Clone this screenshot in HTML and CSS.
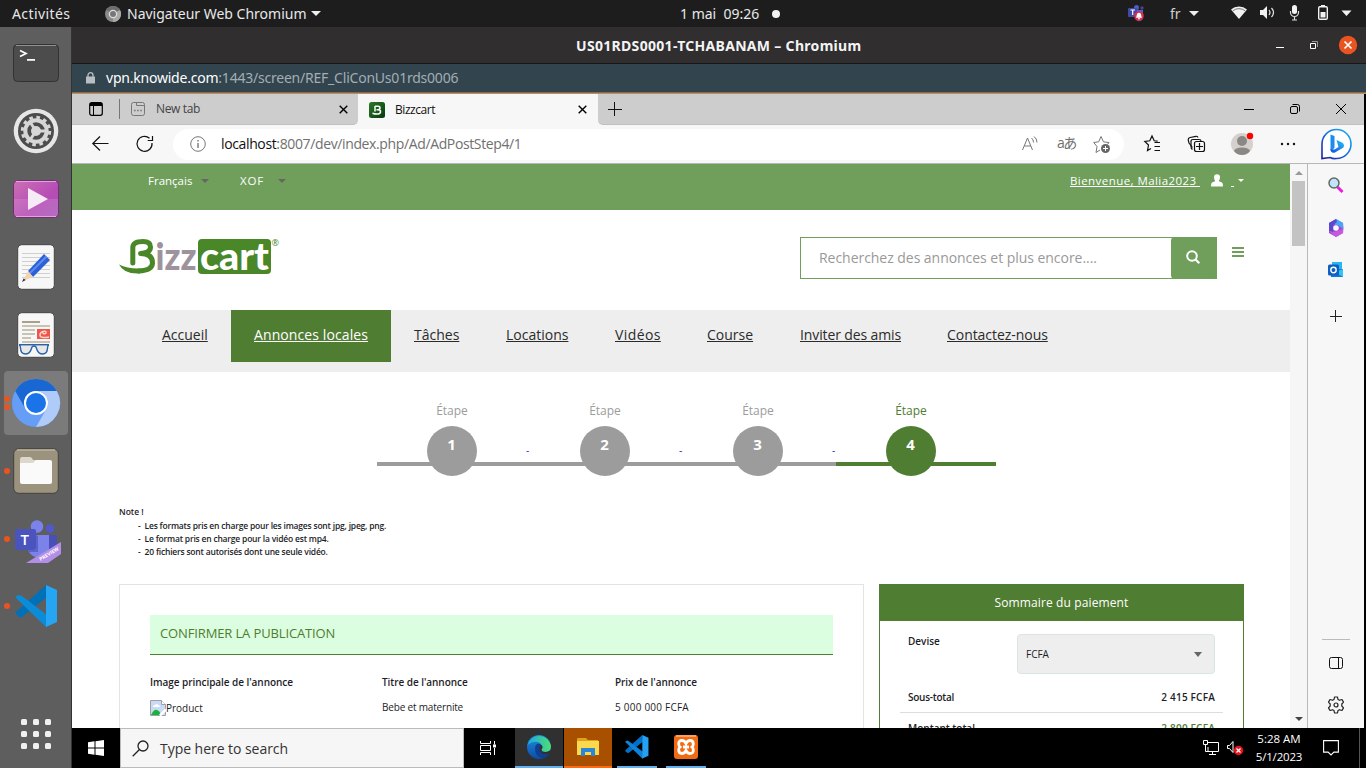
FILE: index.html
```html
<!DOCTYPE html>
<html lang="fr">
<head>
<meta charset="utf-8">
<title>US01RDS0001-TCHABANAM – Chromium</title>
<link rel="stylesheet" href="styles.css">
</head>
<body>
<header class="gnome">
  <span class="gnome-act">Activités</span>
  <svg class="gnome-chrome" width="16" height="16" viewBox="0 0 16 16"><circle cx="8" cy="8" r="8" fill="#8a8a8a"/><path d="M8 8L1.2 4A8 8 0 0 1 15 4z" fill="#6d6d6d"/><path d="M8 8l7-4a8 8 0 0 1-7 12z" fill="#aaa"/><circle cx="8" cy="8" r="4.3" fill="#ddd"/><circle cx="8" cy="8" r="3" fill="#777"/></svg>
  <span class="gnome-app">Navigateur Web Chromium</span>
  <i class="tri gnome-tri"></i>
  <span class="gnome-date">1 mai&nbsp; 09:26</span>
  <i class="gnome-dot"></i>
  <svg class="tray-teams" width="16" height="16" viewBox="0 0 16 16"><circle cx="8.500" cy="2.500" r="2.500" fill="#5059c9"/><circle cx="14" cy="3" r="1.700" fill="#40488f"/><path d="M6 5h9v6a4 4 0 0 1-8 2z" fill="#5b62c5"/><rect y="3" width="9" height="9" rx="1" fill="#4048a8"/><path d="M2.500 5h4.500M4.700 5v5" stroke="#fff" stroke-width="1.200"/><circle cx="11" cy="11" r="4.800" fill="#d6304e"/><path d="M11 7.800c2.500 0 2 3 3 5H8c1-2 .5-5 3-5zM10 13.200h2v1h-2z" fill="#fff"/></svg>
  <span class="gnome-lang">fr</span>
  <i class="tri lang-tri"></i>
  <svg class="tray" width="128" height="18" viewBox="0 0 128 18" fill="#f2f2f2"><path d="M0 5.500a12 12 0 0 1 16 0L8 15z"/><path d="M1.800 6.800a10 10 0 0 1 12.400 0" fill="none" stroke="#777" stroke-width="1"/><path d="M29 6h3l4-4v13l-4-4h-3z"/><path d="M38 6q2 2.500 0 5M40.500 4q4 4.500 0 9" fill="none" stroke="#e8e8e8" stroke-width="1.200"/><rect x="61" y="1" width="5" height="9" rx="2.500"/><path d="M59.500 7v1.500a4 4 0 0 0 8 0V7M63.500 12v4M61 16h5" fill="none" stroke="#ddd" stroke-width="1.200"/><path d="M90 1h4v2h-4z"/><rect x="87.700" y="2.700" width="8.600" height="12.600" rx="1.200" fill="none" stroke="#f2f2f2" stroke-width="1.400"/><path d="M89.500 8h5v5.500h-5zM110.500 6.500h10L115.500 12z"/></svg>
</header>
<div class="desk">
<nav class="dock">
  <svg class="d-term" width="46" height="38" viewBox="0 0 46 38"><rect x=".5" y=".5" width="45" height="37" rx="4" fill="#4c4c4c" stroke="#323232"/><path d="M3 1.500h40" stroke="#909090"/><path d="M7 6.500l6 3-6 3M14 15.800h8" fill="none" stroke="#fff" stroke-width="1.700"/></svg>
  <svg class="d-set" width="46" height="46" viewBox="0 0 46 46"><circle cx="23" cy="23" r="22.300" fill="#e6e6e4"/><circle cx="23" cy="23" r="18" fill="#4c4c4c"/><circle cx="23" cy="23" r="13.700" fill="none" stroke="#d6d6d6" stroke-width="3" stroke-dasharray="3.600 3.570"/><circle cx="23" cy="23" r="10.700" fill="none" stroke="#d6d6d6" stroke-width="4"/><circle cx="23" cy="23" r="5" fill="#d6d6d6"/><path d="M23 23h10M23 23l-6-9M23 23l-6 9" stroke="#d6d6d6" stroke-width="3"/></svg>
  <svg class="d-play" width="46" height="38" viewBox="0 0 46 38"><defs><linearGradient id="pk" x1="0" y1="0" x2="1" y2="1"><stop offset="0" stop-color="#cc70b4"/><stop offset=".6" stop-color="#b64cb6"/><stop offset="1" stop-color="#a65ab8"/></linearGradient></defs><rect x=".5" y=".5" width="45" height="37" rx="4" fill="url(#pk)" stroke="#703070"/><path d="M1 19h44v14q0 4-4 4H5q-4 0-4-4z" fill="#fff" opacity=".12"/><path d="M3 36.500h40M3 1.500h40" stroke="#e3a3dc"/><path d="M15 8l20 11-20 11z" fill="#f5eaf5"/></svg>
  <svg class="d-edit" width="38" height="46" viewBox="0 0 38 46"><rect x=".7" y=".7" width="36.600" height="44.600" rx="4" fill="#f7f7f7" stroke="#444"/><path d="M5 9.500h28M5 13.500h28M5 17.500h28M5 21.500h28M5 25.500h28M5 29.500h28M5 33.500h28" stroke="#cfcfcf"/><path d="M11 27L27 10l6 6-17 17z" fill="#2c60d8"/><path d="M13 29L29.500 12.500" stroke="#5d8cf0" stroke-width="2"/><path d="M11 27L6 37l10-4z" fill="#f4d3b0"/><path d="M6.500 34.500L5 38l3.700-2z" fill="#333"/></svg>
  <svg class="d-doc" width="38" height="46" viewBox="0 0 38 46"><rect x=".7" y=".7" width="36.600" height="44.600" rx="4" fill="#f7f7f7" stroke="#444"/><path d="M5 10h18" stroke="#aaa08c" stroke-width="2"/><path d="M5 14h28M5 18h13M5 22h13M5 26h9M5 30h28" stroke="#c8c4b4" stroke-width="2"/><rect x="20" y="17" width="13" height="10" fill="#ef5548"/><path d="M32 25c-4 1-9 1-9-2 0-4 7-5 6-2-1 2-5 0-3-2" fill="none" stroke="#ffd4cc" stroke-width="1.500"/><path d="M2 33h30" stroke="#2c62a8" stroke-width="2"/><path d="M3 33l1 6q1 3 5 3t6-7q2-2 4 0 2 7 6 7t5-3l1-6" fill="#ddd" fill-opacity=".6" stroke="#2c62a8" stroke-width="1.400"/></svg>
  <div class="d-active"><i></i><i></i><svg width="48" height="48" viewBox="0 0 48 48"><circle cx="24" cy="24" r="24" fill="#669df6"/><path d="M3.200 12A24 24 0 0 1 44.800 12H24A12 12 0 0 0 13.600 30z" fill="#1967d2"/><path d="M44.800 12A24 24 0 0 1 24 48L34.400 30A12 12 0 0 0 24 12z" fill="#aecbfa"/><circle cx="24" cy="24" r="12" fill="#fff"/><circle cx="24" cy="24" r="10" fill="#1a73e8"/></svg></div>
  <div class="d-row d-files"><i></i><svg width="46" height="46" viewBox="0 0 46 46"><rect x=".7" y=".7" width="44.600" height="44.600" rx="5" fill="#9c937f" stroke="#44423a"/><path d="M4 2h38" stroke="#c8c2b2"/><path d="M7 12q0-3 2-3h8q2 0 3 3h17v8H7z" fill="#ded8cc"/><path d="M7 15h13l3-3h14q2 0 2 2v20q0 2-2 2H9q-2 0-2-2z" fill="#fafafa"/></svg></div>
  <div class="d-row d-teams"><i></i><svg width="46" height="43" viewBox="0 0 46 43"><circle cx="22" cy="6.500" r="6.300" fill="#7b83eb"/><circle cx="35" cy="8.500" r="4.300" fill="#5059c9"/><path d="M28 15h14v15q-4 9-12 5z" fill="#4850b8"/><path d="M13 15h21v14a11 11 0 0 1-21 1z" fill="#7b83eb"/><rect y="9" width="21" height="21" rx="2" fill="#4b53bc"/><path d="M21 15v14q0 1-1 1h-7v2h10V16z" fill="#5c63c8"/><path d="M11 43L46 22v12l-13 9z" fill="#b38ee6"/><text x="5.500" y="25" font-family="Open Sans,sans-serif" font-weight="600" font-size="15" fill="#fff">T</text><text transform="translate(25.500 41) rotate(-31)" font-family="Open Sans,sans-serif" font-weight="700" font-size="5" fill="#fff">PREVIEW</text></svg></div>
  <div class="d-row d-code"><i></i><svg width="43" height="43" viewBox="0 0 43 43"><path d="M31 0L1 27q-1 1 0 2l3 3q1 1 3 0l25-20z" fill="#0070b8"/><path d="M1 13q-1-1 0-2l3-1 3 1 25 19v12h-1z" fill="#0c8bd8"/><path d="M31 0l11 5v32l-11 5z" fill="#26a6f2"/></svg></div>
  <svg class="d-grid" width="30" height="30" viewBox="0 0 30 30" fill="#f0f0f0"><rect width="6" height="6" rx="1.500"/><rect x="12" width="6" height="6" rx="1.500"/><rect x="24" width="6" height="6" rx="1.500"/><rect y="12" width="6" height="6" rx="1.500"/><rect x="12" y="12" width="6" height="6" rx="1.500"/><rect x="24" y="12" width="6" height="6" rx="1.500"/><rect y="24" width="6" height="6" rx="1.500"/><rect x="12" y="24" width="6" height="6" rx="1.500"/><rect x="24" y="24" width="6" height="6" rx="1.500"/></svg>
</nav>
<div class="win">
  <div class="titlebar"><span class="title">US01RDS0001-TCHABANAM – Chromium</span>
    <svg class="winbtn" width="90" height="20" viewBox="0 0 90 20"><path d="M4 12.500h8" stroke="#fff"/><path d="M38.500 8.500h5v5h-5z" fill="none" stroke="#fff"/><path d="M40 6.500h5.500V12" fill="none" stroke="#999"/><circle cx="76" cy="10" r="9.200" fill="#e95420"/><path d="M72.500 6.500l7 7M79.500 6.500l-7 7" stroke="#fff" stroke-width="1.700"/></svg>
  </div>
  <div class="urlbar"><svg width="9" height="12" viewBox="0 0 9 12"><path d="M2 5V3.200a2.500 2.500 0 0 1 5 0V5" fill="none" stroke="#b8bec2" stroke-width="1.300"/><rect y="4.500" width="9" height="7" fill="#b8bec2"/></svg><span class="vpn"><b>vpn.knowide.com</b>:1443/screen/REF_CliConUs01rds0006</span></div>
  <div class="remote">
  <div class="tabs">
    <div class="tabs-idle">
      <svg class="tab-menu" width="14" height="14" viewBox="0 0 14 14"><rect x=".7" y=".7" width="12.600" height="12.600" rx="2" fill="none" stroke="#000" stroke-width="1.200"/><path d="M1 1h12v3H1z"/><path d="M4.500 4v9" stroke="#000"/></svg>
      <i class="tab-sep"></i>
      <svg class="tab-new" width="14" height="14" viewBox="0 0 14 14" fill="none" stroke="#777"><rect x=".5" y=".5" width="13" height="13" rx="2"/><path d="M5.500 1v2.500H13"/><path d="M3 8.500h8" stroke-width="1.500" stroke-dasharray="1.600 1.500"/></svg>
      <span class="tab-new-t">New tab</span>
      <svg class="x x1" width="9" height="9" viewBox="0 0 9 9"><path d="M.7.7l7.600 7.600M8.300.7L.7 8.300" stroke="#000" stroke-width="1.400"/></svg>
    </div>
    <div class="tab-on">
      <svg width="16" height="16" viewBox="0 0 16 16"><defs><linearGradient id="bf" x1="0" y1="0" x2="1" y2="1"><stop offset="0" stop-color="#2e7a2a"/><stop offset="1" stop-color="#063a0c"/></linearGradient></defs><rect width="16" height="16" rx="2.500" fill="url(#bf)"/><path d="M6 4.300h3q2 0 2 1.700T9 7.800H7.500M9 7.800q2.500 0 2.500 2T9 12q-3 .2-5.500-.8M6 4v5.500" fill="none" stroke="#fff" stroke-width="1.500"/></svg>
      <span class="tab-t">Bizzcart</span>
      <svg class="x x2" width="9" height="9" viewBox="0 0 9 9"><path d="M.7.700l7.600 7.600M8.300.7L.7 8.300" stroke="#000" stroke-width="1.400"/></svg>
    </div>
    <div class="tabs-rest">
      <svg class="plus" width="14" height="14" viewBox="0 0 14 14"><path d="M0 7.500h14M6.500 0v14" stroke="#111"/></svg>
      <svg class="edgebtn" width="104" height="14" viewBox="0 0 104 14" fill="none" stroke="#000"><path d="M0 7.500h10"/><rect x="46.500" y="4.500" width="7" height="7" rx="1.500"/><path d="M48.500 2.500h5q2 0 2 2v5"/><path d="M92 2l10 10M102 2L92 12"/></svg>
    </div>
  </div>
  <div class="toolbar">
    <svg class="nav-ic" width="62" height="18" viewBox="0 0 62 18" fill="none" stroke="#111" stroke-width="1.200"><path d="M16.500 8.500H.8M8 1.500l-7.200 7 7.200 7"/><path d="M60 8a7.500 7.500 0 1 1-2.500-4.800M60.500 1v4.500h-4.800"/></svg>
    <div class="addr">
      <svg class="info" width="16" height="16" viewBox="0 0 16 16" fill="none" stroke="#777"><circle cx="8" cy="8" r="7.300"/><path d="M8 7v5M8 4v1.500" stroke-width="1.400"/></svg>
      <span class="url"><b>localhost</b>:8007/dev/index.php/Ad/AdPostStep4/1</span>
      <svg class="read" width="16" height="18" viewBox="0 0 16 18" fill="none" stroke="#777"><path d="M.5 15L5.500 3l5 12M2.300 11h6.500"/><path d="M9.500 3q2 1.500 2 4.500M12 1.500q3 2 3 6"/></svg>
      <span class="kana">aあ</span>
      <svg width="17" height="18" viewBox="0 0 17 18" fill="none" stroke="#777"><path d="M7 15l-4 2.500 1-6-3.300-4 5-.7L8 1.500l2.500 5.300 5.500.8-1.500 1.700"/><circle cx="12.500" cy="13.500" r="4.500" fill="#666" stroke="none"/><path d="M10 13.500h5M12.500 11v5" stroke="#fff"/></svg>
    </div>
    <svg class="tool-ic" width="154" height="26" viewBox="0 0 154 26" fill="none" stroke="#111" stroke-width="1.200"><path d="M7 17.500L3.500 19.500 4.500 14 0.800 10.500l5-.7L8 5l2.200 4.800 3.500.3M10.500 11.500H16M10.500 15.500H16M10.500 19.500H16"/><path d="M48.500 16.500L45 12l-.8-3Q44 7 46 6.500l6-1.200q1.500-.3 2 1.200"/><path d="M48.500 18.500q-1.500-1-1.500-3v-5q0-2 2-2h6q2 0 2 1.500"/><rect x="50.500" y="10.500" width="10" height="10" rx="2"/><path d="M52 15.500h7M55.500 12v7"/><g stroke="none"><circle cx="98" cy="13" r="11" fill="#d4d0cd"/><circle cx="98" cy="10" r="5" fill="#8b8784"/><path d="M90 20q1-3.500 8-3.500t8 3.500q-3 4-8 4t-8-4z" fill="#8b8784"/><circle cx="106" cy="5" r="3.200" fill="#f00"/><g fill="#111"><circle cx="138" cy="13" r="1.200"/><circle cx="144" cy="13" r="1.200"/><circle cx="150" cy="13" r="1.200"/></g></g></svg>
    <svg class="bing" width="31" height="31" viewBox="0 0 31 31"><defs><linearGradient id="bb" x1="1" y1="0" x2="0" y2="1"><stop offset="0" stop-color="#19b8f5"/><stop offset=".45" stop-color="#1673e8"/><stop offset="1" stop-color="#231a9a"/></linearGradient><linearGradient id="bg" x1="1" y1="0" x2="0" y2="1"><stop offset="0" stop-color="#25c5f5"/><stop offset="1" stop-color="#174ae4"/></linearGradient></defs><path d="M1 29.500V15A14.500 14.500 0 1 1 15.500 29.500Q12 30 9 28.500z" fill="#fff" stroke="url(#bb)" stroke-width="1.600"/><path d="M9.500 5.500l4 1.500v12l-4 3z" fill="#1a8cf0"/><path d="M15.500 11l5.500 2.500q3 2 1.500 5L14 23.500q-4.500 1-4.500-3.500l4 .5 4-2.500z" fill="url(#bg)"/></svg>
  </div>
  <div class="view">
   <main class="page">
    <div class="topbar">
      <span class="fr">Français</span><i class="tri g1"></i><span class="xof">XOF</span><i class="tri g2"></i>
      <span class="welcome">Bienvenue, Malia2023&nbsp;</span>
      <svg class="user" width="12" height="13" viewBox="0 0 12 13" fill="#fff"><path d="M3 3.500Q3 .3 6 .3t3 3.200q0 2-1 3v.7l3 1.200Q12 9 12 12.500H0Q0 9 1 8.400l3-1.200v-.7q-1-1-1-3z"/></svg>
      <i class="us"></i><i class="tri g3"></i>
    </div>
    <div class="head">
      <svg class="logo" width="160" height="38" viewBox="0 0 160 38"><path d="M13.800 25V10Q13.500 3.600 24 3.600q7.500 0 7.500 5.400 0 6-10 6.500 12 0 12 9.500 0 7.500-14 8" fill="none" stroke="#498728" stroke-width="5" stroke-linecap="round" stroke-linejoin="round"/><path d="M0 26.500Q9 31 21 30.500v5Q5 36.500 0 26.500z" fill="#498728"/><rect x="79" y="1" width="73" height="35" rx="4" fill="#498728"/><g font-family="Lato,sans-serif" font-weight="900"><text x="36.500" y="32" font-size="37" textLength="41" lengthAdjust="spacingAndGlyphs" fill="#9e939c">izz</text><text x="81" y="31.500" font-size="37" textLength="69" lengthAdjust="spacingAndGlyphs" fill="#fff">cart</text></g><text x="152.500" y="8" font-family="Open Sans,sans-serif" font-size="9" fill="#498728">®</text></svg>
      <div class="search"><span>Recherchez des annonces et plus encore....</span><div class="go"><svg width="14" height="14" viewBox="0 0 14 14" fill="none" stroke="#fff" stroke-width="2"><circle cx="6" cy="6" r="4.800"/><path d="M9.300 9.300l4 4" stroke-width="2.200"/></svg></div></div>
      <i class="burger"></i>
    </div>
    <nav class="menu"><a class="w92 m1">Accueil</a><a class="w160 on m2">Annonces locales</a><a class="w92 m3">Tâches</a><a class="w109 m4">Locations</a><a class="w92 m5">Vidéos</a><a class="w93 m6">Course</a><a class="w147 m7">Inviter des amis</a><a class="w147 m8">Contactez-nous</a></nav>
    <div class="steps">
      <div class="step"><span>Étape</span><b>1</b></div><i class="dash">-</i>
      <div class="step"><span>Étape</span><b>2</b></div><i class="dash">-</i>
      <div class="step"><span>Étape</span><b>3</b></div><i class="dash">-</i>
      <div class="step cur"><span>Étape</span><b>4</b></div>
    </div>
    <div class="note"><p class="n0">Note !</p><p class="n1">-&nbsp; Les formats pris en charge pour les images sont jpg, jpeg, png.</p><p class="n2">-&nbsp; Le format pris en charge pour la vidéo est mp4.</p><p class="n3">-&nbsp; 20 fichiers sont autorisés dont une seule vidéo.</p></div>
    <div class="cols">
      <section class="card">
        <h2><span>CONFIRMER LA PUBLICATION</span></h2>
        <div class="grid"><b class="h1">Image principale de l'annonce</b><b class="h2">Titre de l'annonce</b><b class="h3">Prix de l'annonce</b>
        <span class="prod"><svg width="16" height="16" viewBox="0 0 16 16"><path d="M.5 15.500V.5h11l4 4v11z" fill="#c8daf8" stroke="#a0a0a0"/><path d="M11.500.5v4h4" fill="#fff" stroke="#a0a0a0"/><path d="M3 7q0-2 2-2 2-2 3 0 2 0 2 2z" fill="#fff"/><path d="M1 15q3-6 6-5t4 5z" fill="#16b43c"/><path d="M10 15.500l6-6" stroke="#fff" stroke-width="2.500"/></svg><span class="r1">Product</span></span><span class="r2">Bebe et maternite</span><span class="r3">5 000 000 FCFA</span></div>
      </section>
      <aside class="pay">
        <h3><span>Sommaire du paiement</span></h3>
        <div class="dev"><b class="p1">Devise</b><div class="select"><span>FCFA</span><i class="tri"></i></div></div>
        <div class="line"><b class="p2">Sous-total</b><b class="p3">2 415 FCFA</b></div>
        <div class="line tot"><b class="p4">Montant total</b><b class="p5">2 800 FCFA</b></div>
      </aside>
    </div>
   </main>
   <div class="scroll"><i class="up"></i><i class="thumb"></i><i class="down"></i></div>
   <aside class="side">
     <svg class="s1" width="16" height="16" viewBox="0 0 16 16"><path d="M9.500 10l5 5" stroke="#e61ee0" stroke-width="3"/><circle cx="6" cy="6" r="5" fill="#bfe5f8" stroke="#666" stroke-width="1.500"/></svg>
     <svg class="s2" width="16" height="18" viewBox="0 0 16 18"><path d="M8 0l7 4q1 5 0 10l-7 4-7-4V4z" fill="#a347d1"/><path d="M8 0l7 4v6l-5-4-3 1V2z" fill="#45a8f3"/><path d="M8 0L1 4v8l4 1V6l4-3z" fill="#5a49cf"/><path d="M1 12l5 1 9-3v4l-7 4z" fill="#c45ae0"/><circle cx="8" cy="9" r="2.800" fill="#f7f7f7"/></svg>
     <svg class="s3" width="16" height="17" viewBox="0 0 16 17"><path d="M4 1h10v7H4z" fill="#29b5f2"/><path d="M2 8h13v8H3z" fill="#0f7ad6"/><path d="M15 8v8L7 11z" fill="#36c2f6"/><rect y="3.500" width="11" height="11" rx="1.500" fill="#0f5fc0"/><circle cx="5.500" cy="9" r="2.700" fill="none" stroke="#fff" stroke-width="1.400"/></svg>
     <svg class="s4" width="12" height="12" viewBox="0 0 12 12"><path d="M0 6.500h12M5.500 0v12" stroke="#222"/></svg>
     <i class="s-line"></i>
     <svg class="s5" width="14" height="12" viewBox="0 0 14 12" fill="none" stroke="#111"><rect x=".5" y=".5" width="13" height="11" rx="2"/><path d="M9.500.5v11"/></svg>
     <svg class="s6" width="18" height="18" viewBox="0 0 18 18" fill="none" stroke="#222" stroke-width="1.200"><path d="M7.500 1h3l.5 2.500 1.500.8 2.500-.8 1.500 2.600L14.800 8v2l1.700 1.900-1.500 2.600-2.500-.8-1.500.8-.5 2.500h-3L7 14.500l-1.500-.8-2.500.8-1.500-2.600L3.200 10V8L1.500 6.100 3 3.500l2.500.8L7 3.500z" stroke-linejoin="round"/><circle cx="9" cy="9" r="2"/></svg>
   </aside>
  </div>
  </div>
  <footer class="taskbar">
    <div class="start"><svg width="16" height="16" viewBox="0 0 16 16" fill="#fff"><path d="M0 2.200l6.500-.9v6.200H0zM7.500 1.200L16 0v7.500H7.500zM0 8.500h6.500v6.200L0 13.800zM7.500 8.500H16V16l-8.500-1.200z"/></svg></div>
    <div class="find"><svg width="17" height="17" viewBox="0 0 17 17" fill="none" stroke="#222" stroke-width="1.300"><circle cx="11" cy="6" r="5"/><path d="M7.500 9.500L.7 16.300"/></svg><span>Type here to search</span></div>
    <svg class="tv" width="17" height="16" viewBox="0 0 17 16" fill="none" stroke="#fff"><path d="M.5 1v2.500h10V1M.5 15v-2.500h10V15M.5 5.500h10v5H.5zM14.500 1v3.500M14.500 8v7"/><path d="M13 4.500h3v3h-3z" fill="#fff" stroke="none"/></svg>
    <div class="tk t1"><svg width="24" height="24" viewBox="0 0 24 24"><defs><linearGradient id="e1"><stop offset="0" stop-color="#1ca5e8"/><stop offset="1" stop-color="#4fe070"/></linearGradient><linearGradient id="e2" x1="0" y1="0" x2="0" y2="1"><stop offset="0" stop-color="#1a90e0"/><stop offset="1" stop-color="#0c4ca6"/></linearGradient></defs><circle cx="12" cy="12" r="12" fill="url(#e2)"/><path d="M.5 10A12 12 0 0 1 24 11q0 6-6 6-5 0-4-3 2-2 0-5Q9 4 .5 10z" fill="url(#e1)"/><path d="M13 9q-5-1-5 5 0 7 7 9.500 5-1 7.500-5.500-8 3-8.500-4 2-3-1-5z" fill="#103f92"/><path d="M14 10q3 1.500.5 4.500 0 2.500 4 2.500 3 0 5.500-2v3q-4 2-7 1-4.500-1.500-4.500-5 0-3 1.500-4z" fill="#303030"/></svg></div>
    <div class="tk t2"><svg width="22" height="19" viewBox="0 0 22 19"><path d="M0 1q0-1 1-1h8l2 2h10v8H0z" fill="#e0a21c"/><path d="M0 3h22v14H0z" fill="#fbd94e"/><path d="M4 18v-8h14v8h-4v-4H8v4z" fill="#2c86d6"/></svg></div>
    <div class="tk t3"><svg width="24" height="24" viewBox="0 0 43 43"><path d="M31 0L1 27q-1 1 0 2l3 3q1 1 3 0l25-20z" fill="#0070c8"/><path d="M1 13q-1-1 0-2l3-1 3 1 25 19v12h-1z" fill="#0c83d8"/><path d="M31 0l11 5v32l-11 5z" fill="#26a0f2"/></svg></div>
    <div class="tk t4"><svg width="24" height="24" viewBox="0 0 24 24"><rect width="24" height="24" rx="3" fill="#f26a12"/><path d="M2 1h20" stroke="#ffb27a" stroke-width="1.500"/><path d="M12 8.500Q10.500 5.500 8 5.500q-3.500 0-3.300 3.500 0 2 1.300 3-1.300 1-1.300 3 0 3.500 3.300 3.500 2.500 0 4-3 1.500 3 4 3 3.500 0 3.300-3.500 0-2-1.300-3 1.300-1 1.300-3 0-3.500-3.300-3.500-2.500 0-4 3zM9 12h6" fill="none" stroke="#fff" stroke-width="2.800"/></svg></div>
    <svg class="sys" width="41" height="18" viewBox="0 0 41 18" fill="none" stroke="#fff"><path d="M5 3.500h10.500v9H5V8M.5 1.500h4v4h-4zM2.500 5.500v7H5M9.500 12.500v3M6 15.500h7"/><path d="M24.500 6.500h2l3.500-4v11l-3.500-4h-2z"/><circle cx="35.500" cy="11.500" r="4.700" fill="#e8111c" stroke="none"/><path d="M33.500 9.500l4 4M37.500 9.500l-4 4" stroke-width="1.300"/></svg>
    <div class="clock"><span class="c1">5:28 AM</span><span class="c2">5/1/2023</span></div>
    <svg class="msg" width="16" height="16" viewBox="0 0 16 16" fill="none" stroke="#fff" stroke-width="1.100"><path d="M.6 .6h14.800v11.500h-4.500L8 15l-2.900-2.900H.6z"/></svg>
    <i class="showd"></i>
  </footer>
</div>
</div>
</body>
</html>
```
FILE: styles.css
```css
*{box-sizing:border-box}
body{margin:0;width:1366px;height:768px;overflow:hidden;background:#000;font-family:"Open Sans",sans-serif;white-space:nowrap}
svg{display:block;flex:none;overflow:visible}
i{display:block;flex:none;font-style:normal}
span,b{flex:none}
p,h2,h3{margin:0}
.tri{width:0;height:0;border:4px solid transparent;border-top:4px solid #666;border-bottom:0}

.gnome{height:27px;background:#1d1d1d;display:flex;align-items:center;color:#e8e8e8;font:14px/27px "Noto Sans",sans-serif}
.gnome-act{margin-left:12px;width:93px;letter-spacing:.4px}
.gnome-app{margin-left:6px;width:184px}
.gnome-tri,.lang-tri{border-width:5px 5px 0;border-top-color:#eee}
.gnome-date{margin-left:359px;width:92px}
.gnome-dot{width:8px;height:8px;border-radius:4px;background:#f2f2f2}
.tray-teams{margin-left:348px;margin-top:-1px}
.gnome-lang{margin-left:26px;width:19px;color:#cfcfcf}
.tray{margin-left:32px;margin-top:-1px}
.desk{display:flex;height:741px}

.dock{width:72px;flex:none;background:#5e5e5e;border-right:1px solid #333;display:flex;flex-direction:column;padding-top:17px}
.dock>svg{margin-left:13px}
.d-set{margin-top:26px}
.d-play{margin-top:26px}
.dock>.d-edit{margin:26px 0 0 17px}
.dock>.d-doc{margin:22px 0 0 17px}
.d-active{margin:13px 0 0 4px;width:64px;height:64px;border-radius:4px;background:#7b7b7b;display:grid;grid-template:1fr 1fr/8px 48px;align-content:center}
.d-active i{width:6px;height:6px;border-radius:3px;background:#e95420;align-self:end;margin-bottom:1px}
.d-active i+i{grid-column:1;align-self:start;margin:1px 0 0}
.d-active svg{grid-area:1/2/3/3;align-self:center}
.d-row{display:flex;align-items:center;padding-left:4px}
.d-row i{width:6px;height:6px;border-radius:3px;background:#e95420;margin-right:3px}
.d-files{margin-top:13px}
.d-teams{margin-top:26px}
.d-teams i,.d-code i{margin-right:5px;margin-top:-5px}
.d-code{margin-top:22px}
.d-code i{margin-top:-1px}
.dock>.d-grid{margin:91px 0 0 21px}

.win{width:1294px;flex:none;display:flex;flex-direction:column}
.titlebar{height:37px;background:#302e2f;border-bottom:1px solid #181818;display:flex;align-items:center;color:#f4f4f4}
.title{margin-left:504px;width:696px;font:bold 14px "Noto Sans",sans-serif;letter-spacing:.31px}
.urlbar{height:30px;background:#32444e;border-bottom:1px solid #e38330;display:flex;align-items:center;padding:0 0 2px 14px;box-shadow:inset 0 -1px #5b7686}
.vpn{margin-left:11px;font:14px "Noto Sans",sans-serif;letter-spacing:-.22px;color:#a4adb3}
.vpn b{font-weight:400;color:#fff}
.remote{width:1292px}
.tabs{height:31px;display:flex;background:#f7f7f7}
.tabs>div{display:flex;align-items:center}
.tabs-idle{width:286px;background:#cdcdcd;border-bottom:1px solid #c0c0c0;border-radius:0 0 5px 0}
.tab-menu{margin-left:17px}
.tab-sep{width:1px;height:20px;background:#777;margin-left:16px}
.tab-new{margin-left:11px}
.tab-new-t{margin-left:11px;width:183px;font-size:12px;line-height:15px;margin-top:-1px;letter-spacing:-.35px;color:#444}
.tab-on{width:240px;padding-left:11px}
.tab-t{margin-left:10px;width:183px;font-size:12px;line-height:15px;margin-top:-1px;letter-spacing:-.45px;color:#111}
.tabs-rest{flex:1;background:#cdcdcd;border-bottom:1px solid #c0c0c0;border-radius:0 0 0 5px;padding-left:10px}
.edgebtn{margin-left:622px}
.toolbar{height:39px;background:#f7f7f7;border-bottom:1px solid #b8b8b8;display:flex;align-items:center}
.nav-ic{margin-left:20px}
.addr{margin-left:19px;width:951px;height:31px;border-radius:16px;background:#fff;display:flex;align-items:center}
.info{margin-left:17px}
.url{margin-left:15px;width:801px;font-size:14px;line-height:18px;margin-top:-1px;letter-spacing:-.37px;color:#707070}
.url b{font-weight:400;color:#111}
.kana{font:14px/18px "Open Sans","Noto Sans CJK JP",sans-serif;letter-spacing:-1.500px;color:#707070;width:21px;margin:-2px 15px 0 19px}
.tool-ic{margin-left:20px}
.bing{margin-left:23px;margin-right:-20px}
.view{height:564px;display:flex}

.page{width:1218px;height:564px;overflow:hidden;background:#fff;color:#1d1d28}
.topbar{height:46px;background:#709e5b;display:flex;align-items:center;color:#fff;font-size:11.500px;padding:0 0 13px 76px}
.fr{width:53px}
.xof{margin-left:31px;width:38px;letter-spacing:.8px}
.welcome{margin-left:784px;width:130px;letter-spacing:.44px;text-decoration:underline}
.user{margin-left:11px}
.us{width:3px;height:1px;background:#fff;margin:11px 0 0 8px}
.g3{margin-left:4px;border-width:3px 3px 0;border-top-color:#fff}
.head{height:100px;display:flex;padding-left:47px}
.logo{margin-top:28px}
.search{margin:27px 0 0 521px;width:417px;height:42px;border:1px solid #709e5b;display:flex;align-items:center;font-size:14px;color:#999}
.search span{margin:-1px 0 0 18px;width:352px;letter-spacing:-.04px}
.go{width:46px;height:42px;flex:none;background:#709e5b;border-radius:4px;padding:13px 15px}
.burger{width:12px;height:10px;margin:37px 0 0 15px;background:linear-gradient(#709e5b 0 2px,#fff 2px 4px,#709e5b 4px 6px,#fff 6px 8px,#709e5b 8px)}
.menu{height:62px;background:#eee;display:flex;padding-left:67px;font-size:14px;line-height:50px;color:#2b2b2b}
.menu a{height:52px;padding-left:23px;text-decoration:underline}
.menu .on{background:#4f7d31;color:#fff}
.m2{letter-spacing:.1px}.m5{letter-spacing:.4px}.m7{letter-spacing:-.12px}.m8{letter-spacing:-.05px}
.w92{width:92px}.w93{width:93px}.w160{width:160px}.w109{width:109px}.w147{width:147px}
.steps{display:flex;width:619px;height:94px;margin:29px 0 0 305px;background:linear-gradient(90deg,#9c9c9c 459px,#4f7d31 459px) 0 61px/619px 4px no-repeat}
.step{width:150px;display:flex;flex-direction:column;align-items:center;color:#9c9c9c;font-size:12px;line-height:20px}
.step b{margin-top:5px;width:50px;height:50px;border-radius:50%;background:#9c9c9c;color:#fff;text-align:center;font-size:15px;line-height:37px;padding-right:1px}
.step.cur{color:#4f7d31}
.step.cur b{background:#4f7d31}
.dash{width:3px;margin-left:-1px;margin-right:1px;font-size:10px;line-height:99px;color:#22c}
.note{margin:10px 0 0 47px;height:79px;font-size:8.500px;font-weight:600;line-height:13px;letter-spacing:-.2px}
.note p{padding-left:19px}
.note .n0{padding:0 0 1px;letter-spacing:0}
.cols{display:flex;gap:15px;padding-left:47px}
.card{width:745px;height:200px;border:1px solid #e3e3e3;padding:30px}
.card h2{height:40px;background:#dcfee0;border-bottom:1px solid #4f7d31;color:#4f7d31;font:400 13px/37px "Open Sans",sans-serif;letter-spacing:-.13px;padding-left:10px;width:683px}
.grid{display:grid;grid-template-columns:232px 233px 1fr;margin-top:15px;grid-auto-rows:25px;line-height:24px;font-size:10px}
.grid b,.pay b{font-weight:600}
.h1,.h2,.h3{letter-spacing:-.05px}
.r2{letter-spacing:-.18px}
.r3{letter-spacing:.22px}
.prod{display:flex;align-items:center}
.pay{width:365px;height:200px;border:1px solid #4f7d31;font-size:10px}
.pay h3{height:36px;background:#4f7d31;color:#fff;text-align:center;font:500 12px/35px "Open Sans",sans-serif;letter-spacing:.12px}
.dev{display:flex;padding:13px 28px 0;justify-content:space-between;line-height:14px}
.select{width:198px;height:40px;background:#eee;border:1px solid #d9e5e5;border-radius:4px;display:flex;align-items:center;justify-content:space-between;padding:0 12px 0 8px}
.select .tri{border-width:5px 4.500px 0}
.line{display:flex;justify-content:space-between;margin:8px 20px 0;padding:0 8px;height:31px;line-height:30px;border-bottom:1px solid #ddd}
.line.tot{margin-top:0}
.p2{letter-spacing:-.25px}
.p3,.p5{letter-spacing:.2px}
.p5{color:#4f7d31}
.scroll{width:17px;background:#f6f6f6;display:flex;flex-direction:column;align-items:center}
.up,.down{width:0;height:0;border:4px solid transparent;border-top:0;border-bottom:4px solid #999;margin-top:7px}
.thumb{width:13px;height:65px;background:#c3c3c3;margin-top:6px}
.down{border-top:4px solid #444;border-bottom:0;margin-top:471px}
.side{width:57px;background:#f7f7f7;border-left:1px solid #b8b8b8;display:flex;flex-direction:column;align-items:center}
.s1{margin-top:13px}.s2{margin-top:26px}.s3{margin-top:24px}.s4{margin-top:32px}
.s-line{width:28px;height:1px;background:#bbb;margin-top:317px}
.s5{margin-top:17px}.s6{margin-top:27px}

.taskbar{height:40px;background:#000;display:flex;align-items:center;color:#fff}
.start{width:48px;padding-left:16px}
.find{width:344px;height:40px;background:#f6f6f6;border:1px solid #bbb;display:flex;align-items:center;padding-left:11px;color:#333;font-size:14px}
.find span{margin-left:11px;letter-spacing:-.04px}
.tv{margin-left:16px}
.tk{width:48px;height:40px;display:flex;justify-content:center;align-items:center;border-bottom:2px solid #62b0ee}
.t1{background:#303030;margin-left:18px}
.t2{background:#a85000;border-color:#ff6a10;margin-left:1px}
.t3{width:40px;margin-left:5px}
.t4{width:40px;margin-left:9px}
.sys{margin-left:497px}
.clock{width:60px;margin-left:5px;display:flex;flex-direction:column;align-items:center;font-size:11.500px;line-height:18px}
.c2{letter-spacing:-.2px}
.msg{margin-left:14px}
.showd{width:1px;height:40px;background:#555;margin-left:20px}
```
